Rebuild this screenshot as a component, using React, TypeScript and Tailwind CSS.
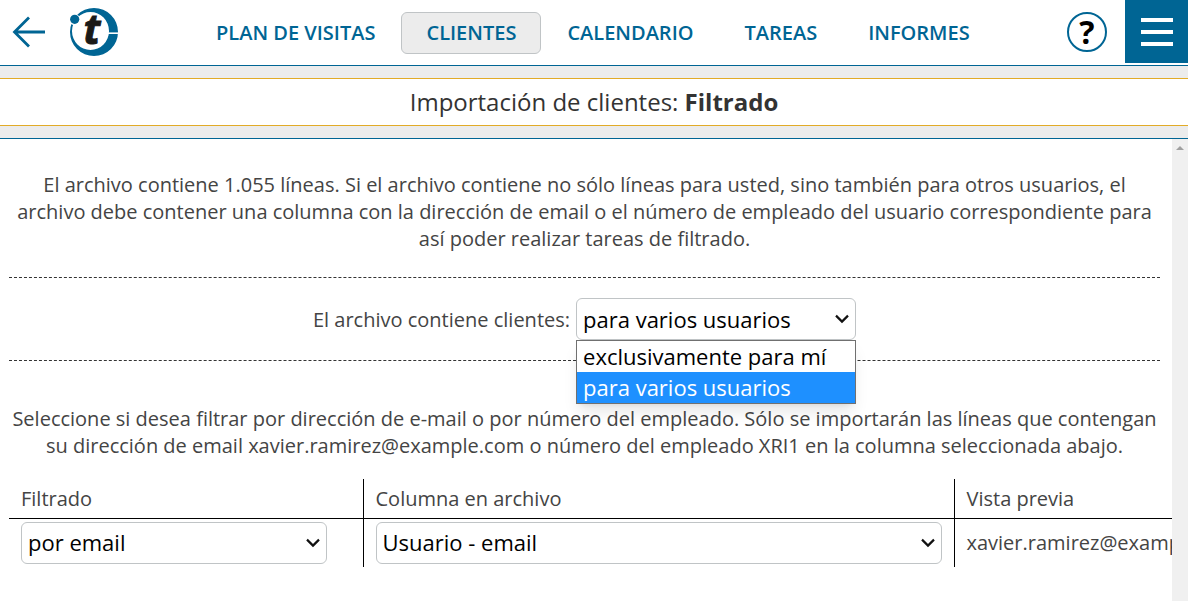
import { useState } from 'react';
import type { SelectHTMLAttributes } from 'react';
import { clsx } from 'clsx';

const NAV_ITEMS = ['PLAN DE VISITAS', 'CLIENTES', 'CALENDARIO', 'TAREAS', 'INFORMES'];

const SCOPES = ['exclusivamente para mí', 'para varios usuarios'];

function Select({ className, children, ...props }: SelectHTMLAttributes<HTMLSelectElement>) {
  return (
    <span className={clsx('relative block', className)}>
      <select
        className="block h-[42px] w-full appearance-none rounded-md border border-[#c0c4c6] bg-white pr-9 pl-[6px] text-[22px] text-black"
        {...props}
      >
        {children}
      </select>
      <svg
        className="pointer-events-none absolute top-[15px] right-[6px] h-3 w-4"
        viewBox="0 0 16 12"
        fill="none"
        stroke="#111"
        strokeWidth="2.2"
        aria-hidden="true"
      >
        <path d="M2 2.6 8 8.6 14 2.6" />
      </svg>
    </span>
  );
}

function Logo() {
  return (
    <svg className="h-12 w-12" viewBox="0 0 48 48" aria-hidden="true">
      <path
        fill="#006594"
        fillRule="evenodd"
        d="M24 0a24 24 0 1 1 0 48A24 24 0 0 1 24 0ZM20.5 4a18.5 19 0 1 0 0 38a18.5 19 0 1 0 0-38Z"
      />
      <path fill="#fff" d="M38 24.4h10V26H38z" />
      <circle cx="4.5" cy="11.5" r="5.6" fill="#fff" />
      <circle cx="4.7" cy="11.3" r="4.6" fill="#006594" />
      <text
        x="22"
        y="36"
        textAnchor="middle"
        fontFamily="Open Sans, sans-serif"
        fontSize="41"
        fontWeight="700"
        fontStyle="italic"
        fill="#1a1a18"
        stroke="#1a1a18"
        strokeWidth="1"
      >
        t
      </text>
    </svg>
  );
}

function Header() {
  return (
    <header className="flex h-[66px] shrink-0 border-b border-[#006594] bg-white">
      <div className="flex h-16 w-[191px] items-center gap-6 pl-3">
        <button type="button" aria-label="Volver">
          <svg className="h-8 w-[34px]" viewBox="0 0 34 32" fill="none" stroke="#006594" strokeWidth="2.8">
            <path d="M17 1.5 2.5 16 17 30.5M2.5 16H33" />
          </svg>
        </button>
        <a href="#inicio" aria-label="Inicio">
          <Logo />
        </a>
      </div>
      <nav className="flex items-center gap-px">
        {NAV_ITEMS.map((item) => (
          <a
            key={item}
            href="#menu"
            className={clsx(
              'flex h-[42px] items-center rounded-md border px-6 text-xl font-semibold whitespace-nowrap text-[#006594]',
              item === 'CLIENTES' ? 'border-[#c0c4c6] bg-[#ececec]' : 'border-transparent',
            )}
          >
            {item}
          </a>
        ))}
      </nav>
      <div className="ml-auto flex items-start">
        <button
          type="button"
          aria-label="Ayuda"
          className="mt-3 mr-[18px] flex h-10 w-10 items-center justify-center rounded-full border-2 border-[#006594] text-[32px] leading-none font-bold text-black"
        >
          ?
        </button>
        <button
          type="button"
          aria-label="Menú"
          className="flex h-[63px] w-[63px] flex-col items-center justify-center gap-2 bg-[#006594]"
        >
          <span className="h-1 w-8 bg-white" />
          <span className="h-1 w-8 bg-white" />
          <span className="h-1 w-8 bg-white" />
        </button>
      </div>
    </header>
  );
}

export default function App() {
  const [scope, setScope] = useState(SCOPES[1]);
  const [open, setOpen] = useState(true);

  return (
    <div className="flex h-screen flex-col overflow-hidden bg-white font-['Open_Sans','Noto_Sans',sans-serif] text-[#333]">
      <Header />

      <div className="shrink-0 border-b border-[#006594] bg-[#ececec] py-3">
        <h1 className="border-y border-[#e2ab27] bg-white py-[7px] text-center text-2xl leading-8">
          Importación de clientes: <b>Filtrado</b>
        </h1>
      </div>

      <div className="flex min-h-0 flex-1">
        <main className="min-w-0 flex-1 overflow-hidden pt-8 pl-[9px] text-xl leading-[27px] text-[#444]">
          <div className="mr-3">
            <p className="text-center">
              El archivo contiene 1.055 líneas. Si el archivo contiene no sólo líneas para usted, sino también para
              otros usuarios, el archivo debe contener una columna con la dirección de email o el número de empleado
              del usuario correspondiente para así poder realizar tareas de filtrado.
            </p>

            <div className="mt-[25px] flex items-center justify-center gap-[6px] border-y border-dashed border-[#333] py-5">
              <label htmlFor="scope">El archivo contiene clientes:</label>
              <div className="relative w-[280px]">
                <Select id="scope" value={scope} onChange={(event) => setScope(event.target.value)}>
                  {SCOPES.map((item) => (
                    <option key={item}>{item}</option>
                  ))}
                </Select>
                {open ? (
                  <ul
                    role="listbox"
                    className="absolute top-full left-0 z-10 w-full border border-[#707070] bg-white text-[22px] text-black shadow-lg"
                  >
                    {SCOPES.map((item) => (
                      <li
                        key={item}
                        role="option"
                        aria-selected={item === scope}
                        className={clsx(
                          'px-[6px] leading-[31px] whitespace-nowrap',
                          item === scope && 'bg-[#1e90ff] text-white',
                        )}
                        onClick={() => {
                          setScope(item);
                          setOpen(false);
                        }}
                      >
                        {item}
                      </li>
                    ))}
                  </ul>
                ) : null}
              </div>
            </div>
          </div>

          <p className="mt-11 mr-3 text-center">
            Seleccione si desea filtrar por dirección de e-mail o por número del empleado. Sólo se importarán las líneas
            que contengan su dirección de email xavier.ramirez@example.com o número del empleado XRI1 en la columna
            seleccionada abajo.
          </p>

          <table className="mt-5 w-full table-fixed border-collapse text-left">
            <thead>
              <tr className="h-[39px] border-b border-black">
                <th className="w-[354px] border-r border-black px-3 font-normal">Filtrado</th>
                <th className="border-r border-black px-3 font-normal">Columna en archivo</th>
                <th className="w-[218px] px-3 font-normal">Vista previa</th>
              </tr>
            </thead>
            <tbody>
              <tr className="h-12">
                <td className="border-r border-black py-[3px] pr-9 pl-3">
                  <Select aria-label="Filtrado" defaultValue="por email">
                    <option>por email</option>
                  </Select>
                </td>
                <td className="border-r border-black px-3 py-[3px]">
                  <Select aria-label="Columna en archivo" defaultValue="Usuario - email">
                    <option>Usuario - email</option>
                  </Select>
                </td>
                <td className="px-3 whitespace-nowrap">xavier.ramirez@example.com</td>
              </tr>
            </tbody>
          </table>
        </main>

        <div className="flex w-4 shrink-0 justify-center bg-[#f0f0f0] pt-[7px]" aria-hidden="true">
          <svg className="h-1 w-2" viewBox="0 0 8 4" fill="#a0a0a0">
            <path d="M4 0 8 4H0z" />
          </svg>
        </div>
      </div>
    </div>
  );
}
